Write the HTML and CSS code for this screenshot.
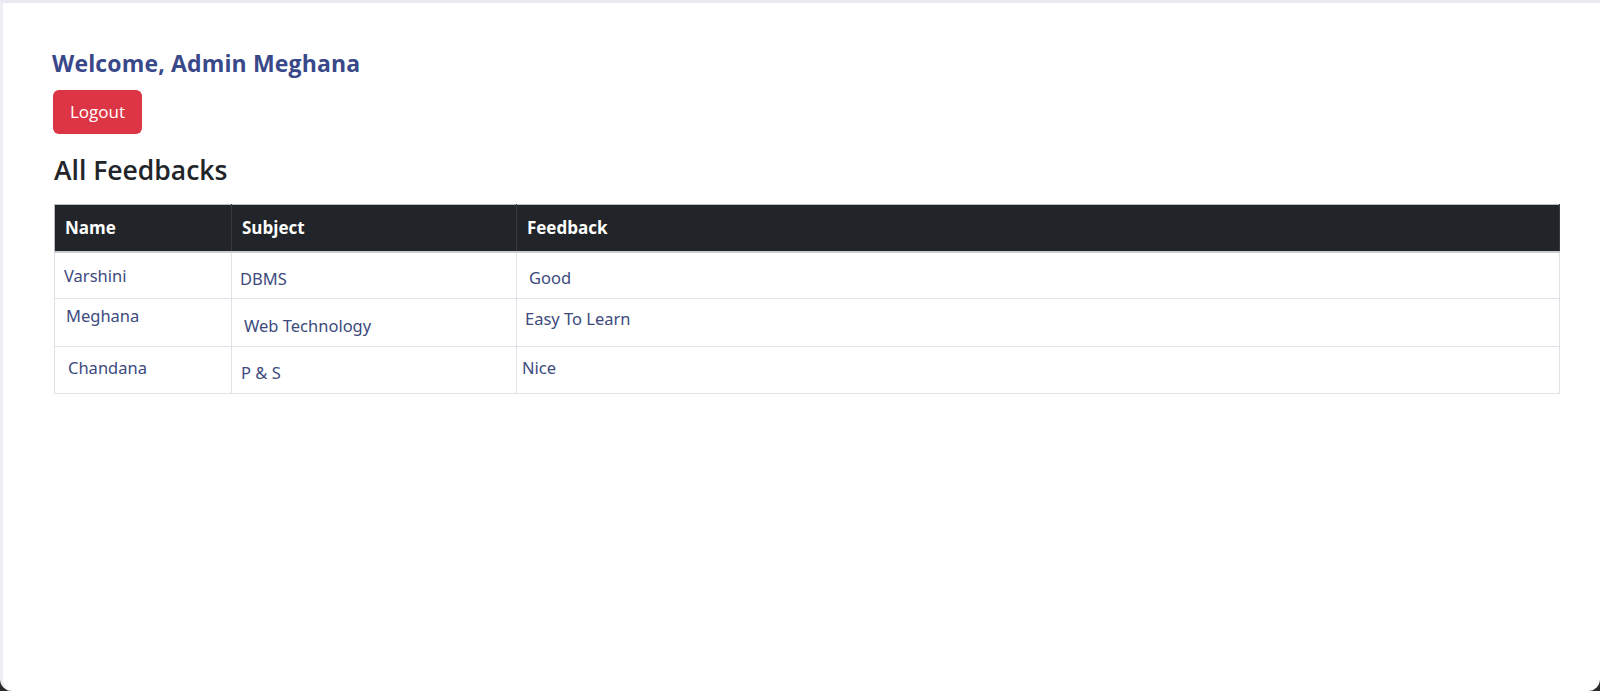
FILE: index.html
```html
<!DOCTYPE html>
<html lang="en">
<head>
<meta charset="utf-8">
<title>Admin Dashboard</title>
<link rel="stylesheet" href="styles.css">
</head>
<body>
<div class="window">
  <main class="content">
    <h2 class="welcome">Welcome, Admin Meghana</h2>
    <button class="btn-logout" type="button">Logout</button>
    <h3 class="section-title">All Feedbacks</h3>
    <table class="feedback-table">
      <colgroup>
        <col class="col-name">
        <col class="col-subject">
        <col class="col-feedback">
      </colgroup>
      <thead>
        <tr>
          <th>Name</th>
          <th>Subject</th>
          <th class="th-feedback">Feedback</th>
        </tr>
      </thead>
      <tbody>
        <tr class="row-a">
          <td class="pt-13 pl-9">Varshini</td>
          <td class="pt-16 pl-8">DBMS</td>
          <td class="pt-15 pl-12">Good</td>
        </tr>
        <tr class="row-b">
          <td class="pt-7 pl-11">Meghana</td>
          <td class="pt-17 pl-12">Web Technology</td>
          <td class="pt-10 pl-8">Easy To Learn</td>
        </tr>
        <tr class="row-a">
          <td class="pt-11 pl-13">Chandana</td>
          <td class="pt-16 pl-9">P &amp; S</td>
          <td class="pt-11 pl-5">Nice</td>
        </tr>
      </tbody>
    </table>
  </main>
</div>
</body>
</html>
```

FILE: styles.css
```css
* {
  box-sizing: border-box;
}

html, body {
  margin: 0;
  padding: 0;
  background: #2a2a2a;
}

.window {
  height: 691px;
  background: #ffffff;
  border-top: 3px solid #e9e9f3;
  border-left: 3px solid #eeeef5;
  border-radius: 0 0 12px 12px;
  overflow: hidden;
}

.content {
  padding: 0 41px 0 49px;
  display: flex;
  flex-direction: column;
  align-items: flex-start;
}

.welcome {
  margin: 46px 0 0 0;
  font-family: "Open Sans", "Liberation Sans", sans-serif;
  font-weight: 700;
  font-size: 23px;
  line-height: 29px;
  color: #394889;
  letter-spacing: 0.15px;
}

.btn-logout {
  margin: 12px 0 0 1px;
  height: 44px;
  width: 89px;
  padding: 0;
  border: none;
  border-radius: 6px;
  background: #dc3545;
  color: #ffffff;
  font-family: "Open Sans", "Liberation Sans", sans-serif;
  font-size: 17px;
  line-height: 44px;
  cursor: pointer;
}

.section-title {
  margin: 19px 0 0 2px;
  font-family: "Open Sans", "Liberation Sans", sans-serif;
  font-weight: 600;
  font-size: 26.5px;
  line-height: 34px;
  color: #212529;
}

.feedback-table {
  margin: 17px 0 0 2px;
  width: 1505px;
  border-collapse: collapse;
  table-layout: fixed;
  font-family: "Noto Sans", "Open Sans", sans-serif;
  font-size: 16.5px;
  color: #3c4a7d;
}

.col-name { width: 177px; }
.col-subject { width: 285px; }
.col-feedback { width: 1043px; }

.feedback-table thead tr {
  background: #212529;
  height: 47px;
}

.feedback-table th {
  text-align: left;
  color: #ffffff;
  font-family: "Open Sans", "Liberation Sans", sans-serif;
  font-weight: 700;
  font-size: 17px;
  line-height: 20px;
  padding: 0 10px;
  border: 1px solid #373b3e;
  border-top-color: #b9bcc0;
  border-bottom: 2px solid #c8cbcf;
}

.feedback-table th:first-child {
  border-left-color: #b9bcc0;
}

.feedback-table th.th-feedback {
  padding-left: 10px;
}

.feedback-table td {
  border: 1px solid #dfe2e6;
  vertical-align: top;
  line-height: 20px;
  padding-right: 10px;
  padding-bottom: 0;
}

.row-a { height: 47px; }
.row-b { height: 48px; }

.pt-7 { padding-top: 7px; }
.pt-10 { padding-top: 10px; }
.pt-11 { padding-top: 11px; }
.pt-13 { padding-top: 13px; }
.pt-15 { padding-top: 15px; }
.pt-16 { padding-top: 16px; }
.pt-17 { padding-top: 17px; }

.pl-5 { padding-left: 5px; }
.pl-8 { padding-left: 8px; }
.pl-9 { padding-left: 9px; }
.pl-11 { padding-left: 11px; }
.pl-12 { padding-left: 12px; }
.pl-13 { padding-left: 13px; }
```
